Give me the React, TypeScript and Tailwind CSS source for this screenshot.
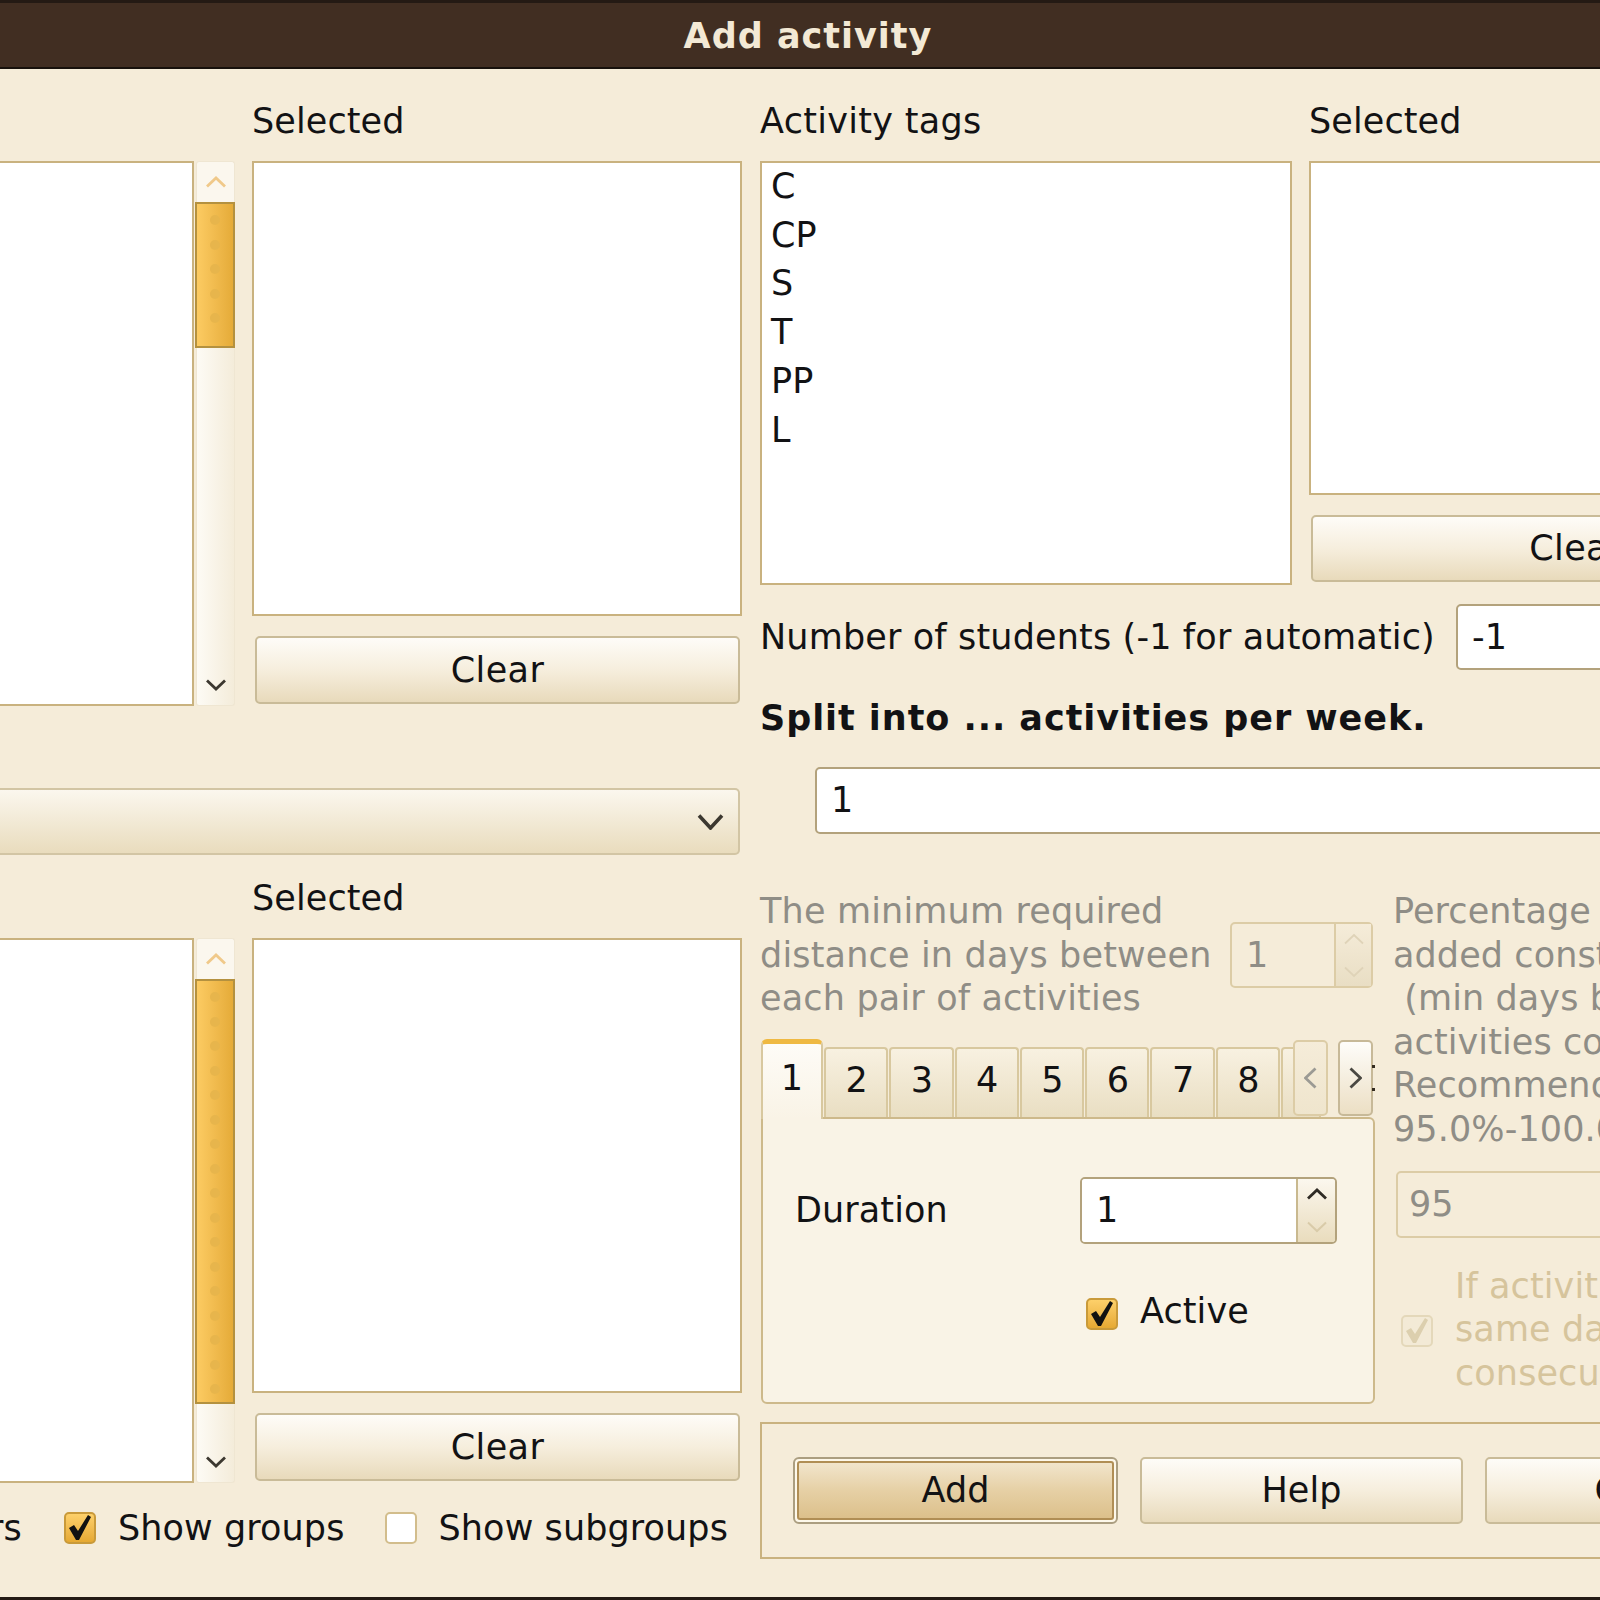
import React from "react";

const font = { fontFamily: '"DejaVu Sans", sans-serif' };

function Chev({ dir, color = "#3c3830", w = 22, h = 12, sw = 2.8 }: { dir: "up" | "down" | "left" | "right"; color?: string; w?: number; h?: number; sw?: number }) {
  const d = {
    up: `M2 ${h - 1.5} L${w / 2} 2 L${w - 2} ${h - 1.5}`,
    down: `M2 1.5 L${w / 2} ${h - 2} L${w - 2} 1.5`,
    left: `M${w - 1.5} 1.5 L1.5 ${h / 2} L${w - 1.5} ${h - 1.5}`,
    right: `M1.5 1.5 L${w - 1.5} ${h / 2} L1.5 ${h - 1.5}`,
  }[dir];
  return (
    <svg width={w} height={h} viewBox={`0 0 ${w} ${h}`} className="block">
      <path d={d} fill="none" stroke={color} strokeWidth={sw} />
    </svg>
  );
}

function Scrollbar({ thumb, dots }: { thumb: string; dots: number }) {
  return (
    <div className="w-[39px] ml-[2px] flex flex-col h-full">
      <div className="h-[41px] shrink-0 flex items-center justify-center rounded-t-[3px] bg-[#fbf7ee] border-x border-t border-[#efe6d2]">
        <Chev dir="up" color="#f0c98a" />
      </div>
      <div className={`${thumb} shrink-0 -ml-[1px] w-[40px] flex flex-col items-center pt-[11px] gap-[14.5px] overflow-hidden border-2 border-[#b4913f] bg-gradient-to-r from-[#fccb62] to-[#e5ab38]`}>
        {Array.from({ length: dots }).map((_, i) => (
          <div key={i} className="w-[10px] h-[10px] shrink-0 rounded-full bg-[#e7b54c]" />
        ))}
      </div>
      <div className="flex-1 flex flex-col justify-end items-center rounded-b-[3px] border-x border-b border-[#efe6d2] bg-gradient-to-r from-[#fdfbf5] to-[#f4ecda] pb-[14px]">
        <Chev dir="down" />
      </div>
    </div>
  );
}

function Button({ children, className = "" }: { children: React.ReactNode; className?: string }) {
  return (
    <div className={`flex items-center justify-center shrink-0 rounded-[5px] border-2 border-[#c9bb98] bg-gradient-to-b from-[#fefcf8] via-[#f6eedd] to-[#e8dabb] ${className}`}>
      {children}
    </div>
  );
}

function Check({ color = "#111" }: { color?: string }) {
  return (
    <svg width="28" height="30" viewBox="0 0 28 30" className="block">
      <path d="M3 15 L8 12 L12 18 L22 2 L25 4 L13 27 L10 27 Z" fill={color} />
    </svg>
  );
}

function Labeled({ label, checked, labelClass = "", className = "" }: { label: string; checked: boolean; labelClass?: string; className?: string }) {
  return (
    <div className={`flex items-center gap-[22px] shrink-0 whitespace-nowrap ${className}`}>
      {checked ? (
        <div className="w-[32px] h-[32px] shrink-0 rounded-[5px] border-2 border-[#c99a3a] bg-gradient-to-b from-[#fdd06a] to-[#e6a932] flex items-center justify-center">
          <Check />
        </div>
      ) : (
        <div className="w-[32px] h-[32px] shrink-0 rounded-[5px] border-2 border-[#d2bd8c] bg-white" />
      )}
      <span className={labelClass}>{label}</span>
    </div>
  );
}

function Section({ listH, boxH, thumb, dots }: { listH: string; boxH: string; thumb: string; dots: number }) {
  return (
    <div className="flex">
      <div className="w-[235px] pt-[93px] shrink-0">
        <div className={`${listH} flex`}>
          <div className="w-[194px] bg-white border-2 border-l-0 border-[#c9b27f]" />
          <Scrollbar thumb={thumb} dots={dots} />
        </div>
      </div>
      <div className="ml-[17px] w-[490px]">
        <div className="h-[93px] pt-[33px] leading-[40px]">Selected</div>
        <div className={`${boxH} bg-white border-2 border-[#c9b27f]`} />
        <Button className="mt-[20px] ml-[3px] w-[485px] h-[68px] tracking-[0.4px]">Clear</Button>
      </div>
    </div>
  );
}

const tabClass =
  "w-[64.3px] h-[70px] mr-[1px] pb-[4px] pl-[1px] shrink-0 flex items-center justify-center rounded-t-[4px] border-2 border-b-0 border-[#d8c89f] bg-gradient-to-b from-[#f8f1e1] to-[#e9dec2]";

function App() {
  return (
    <div style={font} className="w-[1600px] h-[1600px] overflow-hidden bg-[#f5ecd9] text-[#121214] text-[35px] tracking-[0.1px] flex flex-col">
      <div className="h-[69px] -mb-[1px] shrink-0 bg-[#412e22] border-t-[3px] border-t-[#241a14] border-b-2 border-b-[#17110c] flex items-center justify-center pl-[16px] pt-[2px] font-bold text-[35px] tracking-[1px] text-[#f3e9d5]">
        Add activity
      </div>
      <div className="flex flex-1 min-h-0">
        <div className="w-[742px] shrink-0 mr-[18px] flex flex-col">
          <Section listH="h-[545px]" boxH="h-[455px]" thumb="h-[146px]" dots={5} />
          <div className="mt-[82px] h-[67px] w-[740px] shrink-0 flex items-center justify-end pr-[14px] rounded-r-[5px] border-2 border-l-0 border-[#d2c5a4] bg-gradient-to-b from-[#fbf7ee] to-[#e9dcbd]">
            <Chev dir="down" w={27} h={16} sw={3.6} color="#3c3830" />
          </div>
          <div className="-mt-[10px]">
            <Section listH="h-[545px]" boxH="h-[455px]" thumb="h-[425px]" dots={17} />
          </div>
          <div className="mt-[25px] h-[40px] w-[728px] flex justify-end items-center">
            <Labeled label="Show teachers" checked={false} />
            <Labeled label="Show groups" checked className="ml-[42px]" />
            <Labeled label="Show subgroups" checked={false} className="ml-[40px]" />
          </div>
        </div>

        <div className="w-[1100px] shrink-0 flex flex-col">
          <div className="flex gap-[17px]">
            <div className="w-[532px]">
              <div className="h-[93px] pt-[33px] leading-[40px] tracking-[0.3px]">Activity tags</div>
              <div className="h-[424px] bg-white border-2 border-[#c9b27f] pl-[9px] overflow-hidden leading-[48.7px]">
                <div className="-mt-[1px]">C</div>
                <div>CP</div>
                <div>S</div>
                <div>T</div>
                <div>PP</div>
                <div>L</div>
              </div>
            </div>
            <div className="w-[534px]">
              <div className="h-[93px] pt-[33px] leading-[40px]">Selected</div>
              <div className="h-[334px] bg-white border-2 border-[#c9b27f]" />
              <Button className="mt-[20px] ml-[2px] w-[530px] h-[67px] tracking-[0.4px]">Clear</Button>
            </div>
          </div>

          <div className="mt-[19px] h-[66px] flex items-center">
            <div className="w-[696px] shrink-0 whitespace-nowrap tracking-[0.15px]">Number of students (-1 for automatic)</div>
            <div className="w-[400px] h-[66px] rounded-[5px] bg-white border-2 border-[#b3a27c] pl-[14px] flex items-center">-1</div>
          </div>
          <div className="mt-[28px] h-[40px] leading-[40px] font-bold tracking-[0.95px]">Split into ... activities per week.</div>
          <div className="mt-[29px] ml-[55px] h-[67px] w-[900px] rounded-[5px] bg-white border-2 border-[#b3a27c] pl-[14px] flex items-center">1</div>

          <div className="mt-[56px] flex">
            <div className="w-[615px] shrink-0">
              <div className="flex items-center text-[#8f8d86] tracking-[0.17px]">
                <div className="w-[470px] shrink-0 leading-[43.5px] whitespace-nowrap">
                  <div>The minimum required</div>
                  <div>distance in days between</div>
                  <div>each pair of activities</div>
                </div>
                <div className="w-[143px] h-[66px] flex rounded-[5px] border-2 border-[#dccca6]">
                  <div className="w-[102px] flex items-center pl-[14px]">1</div>
                  <div className="flex-1 flex flex-col items-center justify-center gap-[21px] border-l-2 border-[#dccca6] bg-gradient-to-b from-[#f5ecd9] to-[#e9dec4]">
                    <Chev dir="up" color="#dfd3b8" sw={1.8} />
                    <Chev dir="down" color="#dfd3b8" sw={1.8} />
                  </div>
                </div>
              </div>

              <div className="relative mt-[16px] h-[80px] pl-[1px] flex items-end">
                <div className="w-[62px] h-[80px] mr-[1px] shrink-0 relative z-10 -mb-[2px] flex items-start justify-center pt-[8px] rounded-t-[6px] border-x-2 border-[#d8c89f] border-t-[5px] border-t-[#efb942] bg-gradient-to-b from-[#fefcf7] to-[#f9f3e6]">
                  1
                </div>
                {["2", "3", "4", "5", "6", "7", "8"].map((t) => (
                  <div key={t} className={tabClass}>{t}</div>
                ))}
                <div className="w-[40px] h-[70px] shrink-0 rounded-t-[4px] border-2 border-b-0 border-[#d8c89f] bg-gradient-to-b from-[#f8f1e1] to-[#e9dec2]" />
                <div className="absolute left-[533px] top-[3px] w-[35px] h-[76px] rounded-[5px] border-2 border-[#dccca6] bg-gradient-to-b from-[#f5ecd9] to-[#efe5cd] flex items-center justify-center">
                  <Chev dir="left" color="#9b9a94" w={13} h={22} sw={2.8} />
                </div>
                <div className="absolute left-[578px] top-[3px] w-[35px] h-[76px] rounded-[5px] border-2 border-[#c7b998] bg-gradient-to-b from-[#fefdfa] to-[#ecdfc4] flex items-center justify-center">
                  <Chev dir="right" color="#4a4842" w={13} h={22} sw={2.8} />
                </div>
                <div className="absolute left-[612px] top-[28px] w-[3px] h-[26px] flex flex-col justify-between">
                  <div className="w-[3px] h-[3px] bg-[#332b20]" />
                  <div className="w-[3px] h-[3px] bg-[#332b20]" />
                </div>
              </div>
              <div className="h-[287px] ml-[1px] w-[614px] rounded-b-[6px] rounded-tr-[6px] border-2 border-[#cdb98b] bg-[#f9f3e6] pt-[58px]">
                <div className="flex items-center">
                  <div className="ml-[32px] w-[285px] shrink-0">Duration</div>
                  <div className="w-[257px] h-[67px] flex rounded-[5px] border-2 border-[#b3a27c] overflow-hidden">
                    <div className="w-[216px] bg-white flex items-center pl-[14px] border-r-2 border-[#c9b98f]">1</div>
                    <div className="flex-1 flex flex-col items-center justify-center gap-[21px] bg-gradient-to-b from-[#fbf7ee] to-[#e9dcbd]">
                      <Chev dir="up" color="#2f2b25" />
                      <Chev dir="down" color="#d9cba9" sw={2} />
                    </div>
                  </div>
                </div>
                <div className="mt-[47px] ml-[323px]">
                  <Labeled label="Active" checked labelClass="-mt-[6px]" />
                </div>
              </div>
            </div>

            <div className="ml-[18px] w-[500px] shrink-0">
              <div className="leading-[43.6px] text-[#8f8d86] whitespace-pre">
                <div>Percentage of</div>
                <div>added constraint</div>
                <div> (min days between</div>
                <div>activities constraint).</div>
                <div>Recommended:</div>
                <div>95.0%-100.0%</div>
              </div>
              <div className="mt-[19px] ml-[3px] h-[67px] rounded-[5px] border-2 border-[#dccca6] pl-[11px] flex items-center text-[#8f8d86]">95</div>
              <div className="mt-[27px] ml-[8px] flex items-center">
                <div className="w-[32px] h-[32px] mt-[2px] shrink-0 rounded-[5px] border-2 border-[#e4d8ba] bg-[#f3ead6] flex items-center justify-center">
                  <Check color="#dccfae" />
                </div>
                <div className="ml-[22px] text-[#d6c49c] leading-[43.5px] whitespace-nowrap">
                  <div>If activities are on the</div>
                  <div>same day, force</div>
                  <div>consecutive</div>
                </div>
              </div>
            </div>
          </div>

          <div className="mt-[18px] h-[137px] w-[1050px] shrink-0 border-2 border-[#c9b27f] pl-[31px] pt-[33px] flex gap-[22px]">
            <div className="w-[325px] h-[67px] shrink-0 rounded-[6px] border-2 border-[#ab9e80] bg-[#fdf8ea] p-[2px]">
              <div className="w-full h-full flex items-center justify-center rounded-[3px] border-2 border-[#b08e55] bg-gradient-to-b from-[#f1e5cc] via-[#e6d0a5] to-[#dcc08b]">Add</div>
            </div>
            <Button className="w-[323px] h-[67px]">Help</Button>
            <Button className="w-[315px] h-[67px]">Close</Button>
          </div>
        </div>
      </div>
      <div className="h-[3px] shrink-0 bg-[#241a14]" />
    </div>
  );
}

export default App;
